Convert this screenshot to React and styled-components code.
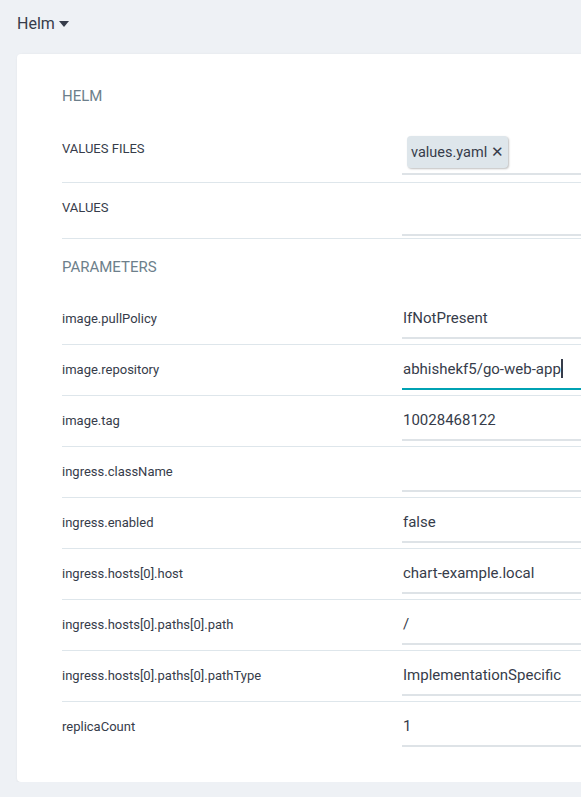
import React from "react";
import styled, { createGlobalStyle } from "styled-components";

const Global = createGlobalStyle`
  html, body { margin: 0; padding: 0; overflow: hidden; }
  body {
    background: #eef1f5;
    font-family: Roboto, "Liberation Sans", sans-serif;
    color: #363c4a;
  }
`;

const Page = styled.div`
  padding: 12px 0 0 17px;
  width: 700px;
`;

const Toggle = styled.div`
  display: flex;
  align-items: center;
  gap: 4px;
  height: 22px;
  font-size: 16px;
  color: #363c4a;
`;

const Caret = styled.span`
  width: 0;
  height: 0;
  border-left: 5px solid transparent;
  border-right: 5px solid transparent;
  border-top: 6px solid #363c4a;
  margin-top: 2px;
`;

const Card = styled.div`
  margin-top: 20px;
  background: #fff;
  border-radius: 4px;
  box-shadow: 1px 1px 3px rgba(0, 0, 0, 0.12);
  padding: 0 0 29px 45px;
`;

const SectionTitle = styled.div`
  height: ${(p) => p.$h}px;
  display: flex;
  align-items: center;
  padding-top: ${(p) => p.$pt || 0}px;
  box-sizing: border-box;
  font-size: 15px;
  color: #6d7f8b;
  text-transform: uppercase;
`;

const Row = styled.div`
  display: grid;
  grid-template-columns: 340px 1fr;
  box-sizing: border-box;
  height: ${(p) => p.$h}px;
  border-bottom: ${(p) => (p.$last ? "none" : "1px solid #dee6eb")};
`;

const Label = styled.div`
  font-size: 13px;
  color: #363c4a;
  padding-top: ${(p) => p.$top}px;
  line-height: 16px;
`;

const Field = styled.div`
  height: ${(p) => p.$h}px;
  box-sizing: border-box;
  border-bottom: 2px solid ${(p) => (p.$focus ? "#00a2b3" : "#dee3e7")};
  display: flex;
  align-items: ${(p) => (p.$chips ? "flex-end" : "center")};
  padding-left: 1px;
  padding-bottom: ${(p) => (p.$chips ? "5px" : "0")};
  padding-top: ${(p) => (p.$chips ? "0" : "4px")};
  font-size: 15px;
  color: #363c4a;
`;

const Cursor = styled.span`
  display: inline-block;
  width: 2px;
  height: 19px;
  background: #363c4a;
`;

const Chip = styled.span`
  display: inline-flex;
  align-items: center;
  gap: 4px;
  height: 32px;
  box-sizing: border-box;
  margin-left: 4px;
  padding: 0 4px 0 4px;
  background: #dee6eb;
  border-radius: 4px;
  box-shadow: 1px 1px 2px rgba(0, 0, 0, 0.25);
  font-size: 14.5px;
  color: #363c4a;
`;

const ChipX = styled.span`
  font-size: 15px;
  font-weight: 500;
`;

const params = [
  ["image.pullPolicy", "IfNotPresent"],
  ["image.repository", "abhishekf5/go-web-app", true],
  ["image.tag", "10028468122"],
  ["ingress.className", ""],
  ["ingress.enabled", "false"],
  ["ingress.hosts[0].host", "chart-example.local"],
  ["ingress.hosts[0].paths[0].path", "/"],
  ["ingress.hosts[0].paths[0].pathType", "ImplementationSpecific"],
  ["replicaCount", "1"],
];

export default function App() {
  return (
    <>
      <Global />
      <Page>
        <Toggle>
          Helm <Caret />
        </Toggle>
        <Card>
          <SectionTitle $h={69} $pt={14}>HELM</SectionTitle>
          <Row $h={60}>
            <Label $top={18}>VALUES FILES</Label>
            <Field $h={52} $chips>
              <Chip>
                values.yaml <ChipX>✕</ChipX>
              </Chip>
            </Field>
          </Row>
          <Row $h={56}>
            <Label $top={17}>VALUES</Label>
            <Field $h={53} />
          </Row>
          <SectionTitle $h={55}>PARAMETERS</SectionTitle>
          {params.map(([k, v, focus], i) => (
            <Row key={k} $h={51} $last={i === params.length - 1}>
              <Label $top={17}>{k}</Label>
              <Field $h={45} $focus={focus}>
                {v}
                {focus && <Cursor />}
              </Field>
            </Row>
          ))}
        </Card>
      </Page>
    </>
  );
}
